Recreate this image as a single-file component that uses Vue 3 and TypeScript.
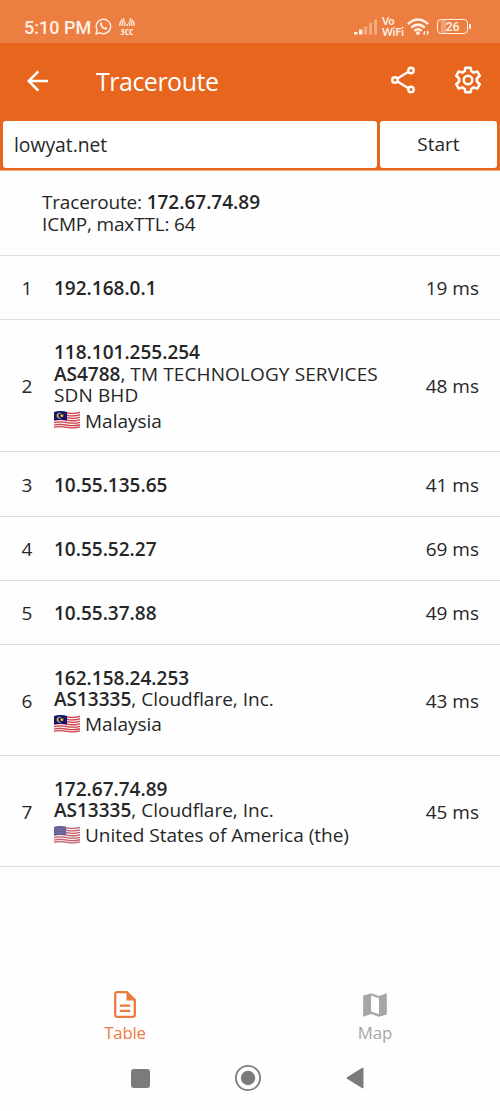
<script setup lang="ts">
interface Hop {
  id: number
  ip: string
  ms: number
  height: number
  asn?: string
  org?: string
  country?: string
  flag?: 'my' | 'us'
}

const hops: Hop[] = [
  { id: 1, ip: '192.168.0.1', ms: 19, height: 64 },
  { id: 2, ip: '118.101.255.254', ms: 48, height: 132, asn: 'AS4788', org: 'TM TECHNOLOGY SERVICES SDN BHD', country: 'Malaysia', flag: 'my' },
  { id: 3, ip: '10.55.135.65', ms: 41, height: 65 },
  { id: 4, ip: '10.55.52.27', ms: 69, height: 64 },
  { id: 5, ip: '10.55.37.88', ms: 49, height: 64 },
  { id: 6, ip: '162.158.24.253', ms: 43, height: 111, asn: 'AS13335', org: 'Cloudflare, Inc.', country: 'Malaysia', flag: 'my' },
  { id: 7, ip: '172.67.74.89', ms: 45, height: 111, asn: 'AS13335', org: 'Cloudflare, Inc.', country: 'United States of America (the)', flag: 'us' },
]

const stripe = (y: number) => `M0 ${y}C5 ${y - 1.4} 8 ${y - 1} 13 ${y}S21 ${y + 1} 26 ${y - 0.4}`
const stripes = [1.9, 4.5, 7.1, 9.7, 12.3, 14.9, 17.2]
</script>

<template>
  <main class="screen">
    <div class="status">
      <span class="clock">5:10 PM</span>
      <svg class="whatsapp" width="17" height="17" viewBox="0 0 17 17" fill="none" stroke="#fff1e6">
        <path d="M1 16l1.1-4.1A7.2 7.2 0 1 1 5 14.8z" stroke-width="1.4" stroke-linejoin="round" />
        <path d="M5.2 5.2c.2-.8 1.2-1.3 1.5-.6l.6 1.3c.2.4-.5.9-.4 1.2.6 1.2 1.5 2 2.7 2.6.5.2.8-.9 1.3-.6l1.3.7c.6.3-.2 1.5-1.1 1.7-2.9.5-6.4-3.2-5.9-6.3z" fill="#fff1e6" stroke="none" />
      </svg>
      <span class="carrier">
        <svg width="16" height="9" viewBox="0 0 16 9" fill="none" stroke="#fff1e6" stroke-width="1.2">
          <path d="M5.6 8a2.6 2.6 0 0 1 1-3.4M3.2 8A5 5 0 0 1 5.8 2.4M.8 8A7.5 7.5 0 0 1 5.4.5M10.4 8a2.6 2.6 0 0 0-1-3.4M12.8 8a5 5 0 0 0-2.6-5.6M15.2 8A7.5 7.5 0 0 0 10.6.5" />
          <circle cx="8" cy="7" r="1" fill="#fff1e6" stroke="none" />
        </svg>
        <span class="cc">3CC</span>
      </span>
      <svg class="signal" width="24" height="16" viewBox="0 0 24 16" fill="#fff1e6">
        <path d="M0 13h3.5v2.4H0zM5 10.5h3.5v4.9H5z" />
        <path d="M10 7.5h3.2v7.9H10zM15 4h3v11.4h-3zM20 .6h3v14.8h-3z" opacity=".38" />
      </svg>
      <span class="vowifi"><span>Vo</span><span>WiFi</span></span>
      <svg class="wifi" width="23" height="18" viewBox="0 0 23 18" fill="none" stroke="#fff1e6" stroke-width="2.5">
        <path d="M1 6.1q10-9.2 20 0M4.2 9.6q6.8-6 13.6 0M7.3 12.9q3.7-3.2 7.4 0" />
        <circle cx="11" cy="15.1" r="1.9" fill="#fff1e6" stroke="none" />
        <path d="M17.5 12.9v3.6M16 15l1.5 1.7M20.3 16.9v-3.7M20.3 13.2l1.5 1.6" stroke-width="1.1" />
      </svg>
      <span class="battery"><span>26</span></span>
    </div>

    <header class="appbar">
      <svg class="back" width="22" height="22" viewBox="0 0 22 22" fill="none" stroke="#fff" stroke-width="2.5">
        <path d="M21 11H2M11.3 1.3L1.7 11l9.6 9.7" />
      </svg>
      <h1>Traceroute</h1>
      <svg class="share" width="25" height="28" viewBox="0 0 25 28" fill="none" stroke="#fff" stroke-width="2.4">
        <path d="M6.5 12.5L17 6M6.5 15.5L17 22" />
        <circle cx="3.9" cy="14" r="2.7" /><circle cx="20" cy="4.5" r="2.7" /><circle cx="20" cy="23.4" r="2.7" />
      </svg>
      <svg class="gear" width="28" height="28" viewBox="0 0 28 28" fill="none" stroke="#fff" stroke-width="2.5" stroke-linejoin="round">
        <path d="M11.4 1.7h5.2l.7 3.5 2.4 1.4 3.5-1.2 2.6 4.4-2.8 2.4v3.6l2.8 2.4-2.6 4.4-3.5-1.2-2.4 1.4-.7 3.5h-5.2l-.7-3.5-2.4-1.4-3.5 1.2-2.6-4.4L5 15.8v-3.6L2.2 9.8l2.6-4.4 3.5 1.2 2.4-1.4z" />
        <circle cx="14" cy="14" r="4.3" />
      </svg>
    </header>

    <div class="query">
      <div class="field">lowyat.net</div>
      <div class="start">Start</div>
    </div>

    <section class="summary">
      <div>Traceroute: <b>172.67.74.89</b></div>
      <div>ICMP, maxTTL: 64</div>
    </section>

    <section v-for="hop in hops" :key="hop.id" class="hop" :style="{ height: hop.height + 'px' }">
      <span class="num">{{ hop.id }}</span>
      <div class="info">
        <div><b>{{ hop.ip }}</b></div>
        <div v-if="hop.asn"><b>{{ hop.asn }}</b>, <span :class="{ caps: hop.id === 2 }">{{ hop.org }}</span></div>
        <div v-if="hop.country" class="country">
          <svg width="26" height="18" viewBox="0 0 26 19" preserveAspectRatio="none" fill="none">
            <path d="M0 1C5-.4 8 0 13 1s8 1 13-.4V17.4c-5 1.4-8 1.4-13 .4s-8-1.4-13 0z" fill="#f4eeee" />
            <path v-for="y in stripes" :key="y" :d="stripe(y)" :stroke="hop.flag === 'my' ? '#d4404a' : '#c4606c'" stroke-width="1.35" />
            <template v-if="hop.flag === 'my'">
              <path d="M0 1C5-.4 8 0 13 1v9C8 9 5 8.8 0 10z" fill="#131375" />
              <path d="M6.8 2.2a2.9 2.9 0 1 0 0 5.4 2.7 2.7 0 1 1 0-5.4z" fill="#f2d11e" stroke="#f2d11e" stroke-width=".4" />
              <circle cx="7.9" cy="4.9" r="1.5" fill="#e8ca2c" />
            </template>
            <template v-else>
              <path d="M0 1C5-.4 8 0 12 .8v9C8 9 5 8.8 0 10z" fill="#605d94" />
              <path d="M1.5 2.7h10M1.5 4.9h10M1.5 7.1h10" stroke="#aaa8c8" stroke-width=".7" stroke-dasharray="1 1" />
            </template>
          </svg>
          <span>{{ hop.country }}</span>
        </div>
      </div>
      <span class="ms">{{ hop.ms }} ms</span>
    </section>

    <footer>
      <div class="tabs">
        <div class="tab active">
          <svg width="22" height="27" viewBox="0 0 22 27" fill="none" stroke="#ea7b41" stroke-width="2.3">
            <path d="M12.8 1.2H3A1.8 1.8 0 0 0 1.2 3v21A1.8 1.8 0 0 0 3 25.8h16a1.8 1.8 0 0 0 1.8-1.8V8.8z" stroke-linejoin="round" />
            <path d="M12.5 1.2l8.3 8.3h-8.3z" fill="#ea7b41" stroke="none" />
            <path d="M5.8 14.7h10.5M5.8 19.8h10.5" />
          </svg>
          <span>Table</span>
        </div>
        <div class="tab">
          <svg width="24" height="24" viewBox="0 0 24 24" fill="#a6a6a6">
            <path fill-rule="evenodd" d="M.2 2.5L8 .2l8 2.7L23.8.2v21.3L16 23.8l-8-2.7-7.8 2.7zM8 2.6v15.8l8 2.8V5.3z" />
          </svg>
          <span>Map</span>
        </div>
      </div>
      <nav>
        <svg width="19" height="19"><rect width="19" height="19" rx="3" fill="#7b7b7b" /></svg>
        <svg width="26" height="26" viewBox="0 0 26 26"><circle cx="13" cy="13" r="12.1" fill="none" stroke="#7b7b7b" stroke-width="1.8" /><circle cx="13" cy="13" r="7.2" fill="#7b7b7b" /></svg>
        <svg width="18" height="22" viewBox="0 0 18 22"><path d="M1 10.2L16.3.8q1.2-.5 1.2.8v18.8q0 1.3-1.2.8L1 11.8q-1-.8 0-1.6z" fill="#7b7b7b" /></svg>
      </nav>
    </footer>
  </main>
</template>

<style>
body { background: #fefefe; }
</style>

<style scoped>
* { box-sizing: border-box; }
.screen {
  width: 500px; height: 1111px; overflow: hidden; background: #fefefe; color: #262626;
  display: flex; flex-direction: column;
  font: 19px/21.5px "Open Sans", "Noto Sans", sans-serif;
}
svg { display: block; flex: none; }
b { font-weight: 600; display: inline-block; }
.status { height: 43px; flex: none; background: #ec7e41; display: flex; align-items: flex-start; padding-left: 24px; color: #fff1e6; }
.clock { font: 500 18px/22px Roboto, sans-serif; margin-top: 17px; width: 71px; white-space: nowrap; }
.whatsapp { margin-top: 18px; }
.carrier { margin: 18px 0 0 7px; width: 16px; display: flex; flex-direction: column; align-items: center; }
.cc { font: 700 9px/9px "Open Sans", sans-serif; font-stretch: 75%; }
.signal { margin: 19px 0 0 219px; }
.vowifi { margin: 16px 0 0 4px; width: 22px; font: 700 10.4px/10.5px Lato, sans-serif; display: flex; flex-direction: column; }
.wifi { margin: 18px 0 0 3px; }
.battery { position: relative; margin: 19px 0 0 7px; width: 31px; height: 15px; border: 1.5px solid #fff1e6; border-radius: 4px; font: 500 12.5px/13px Roboto, sans-serif; text-align: center; background: linear-gradient(90deg, transparent 3px, #f1a074 3px, #f1a074 8px, transparent 8px); }
.battery::after { content: ""; position: absolute; right: -4px; top: 3.5px; width: 2px; height: 5px; background: #fff1e6; border-radius: 1px; }
.appbar { height: 78px; flex: none; background: #e8651d; display: flex; align-items: flex-start; padding-left: 27px; color: #fff; }
.back { margin-top: 27px; }
h1 { margin: 22px 0 0 47px; width: 295px; font-size: 25px; letter-spacing: -.5px; line-height: 32px; font-weight: 400; }
.share { margin-top: 23px; }
.gear { margin: 23px 0 0 38px; }
.query { height: 50px; flex: none; background: #e8651d; padding: 0 3px 2px; display: flex; gap: 3px; border-bottom: 1px solid #f1ab80; }
.field, .start { background: #fff; border-radius: 3px; line-height: 47px; height: 47px; }
.field { width: 374px; padding-left: 11px; font-size: 19.3px; }
.start { width: 117px; text-align: center; }
.summary { height: 85px; flex: none; padding: 21px 0 0 42px; border-bottom: 1px solid #dedede; letter-spacing: -.18px; }
.summary b { letter-spacing: 0; }
.hop { flex: none; display: flex; align-items: center; border-bottom: 1px solid #dedede; padding-top: 3px; }
.num { width: 54px; text-align: center; }
.info { width: 335px; }
.caps { letter-spacing: .12px; }
.country { display: flex; align-items: center; height: 29px; gap: 5px; margin-bottom: -4px; }
.country svg { margin-top: -3px; }
.ms { width: 90px; text-align: right; white-space: nowrap; }
footer { margin-top: auto; height: 121px; display: flex; flex-direction: column; }
.tabs { display: flex; height: 75px; }
.tab { width: 250px; display: flex; flex-direction: column; align-items: center; color: #a6a6a6; font-size: 16.8px; }
.tab svg { margin-top: 3px; }
.tab span { margin-top: 5px; }
.active { color: #ea7b41; }
.active svg { margin-top: 1px; }
.active span { margin-top: 4px; letter-spacing: -.2px; }
nav { display: flex; align-items: center; padding-left: 131px; height: 26px; }
nav svg:nth-child(2) { margin-left: 85px; }
nav svg:nth-child(3) { margin-left: 85px; }
</style>
